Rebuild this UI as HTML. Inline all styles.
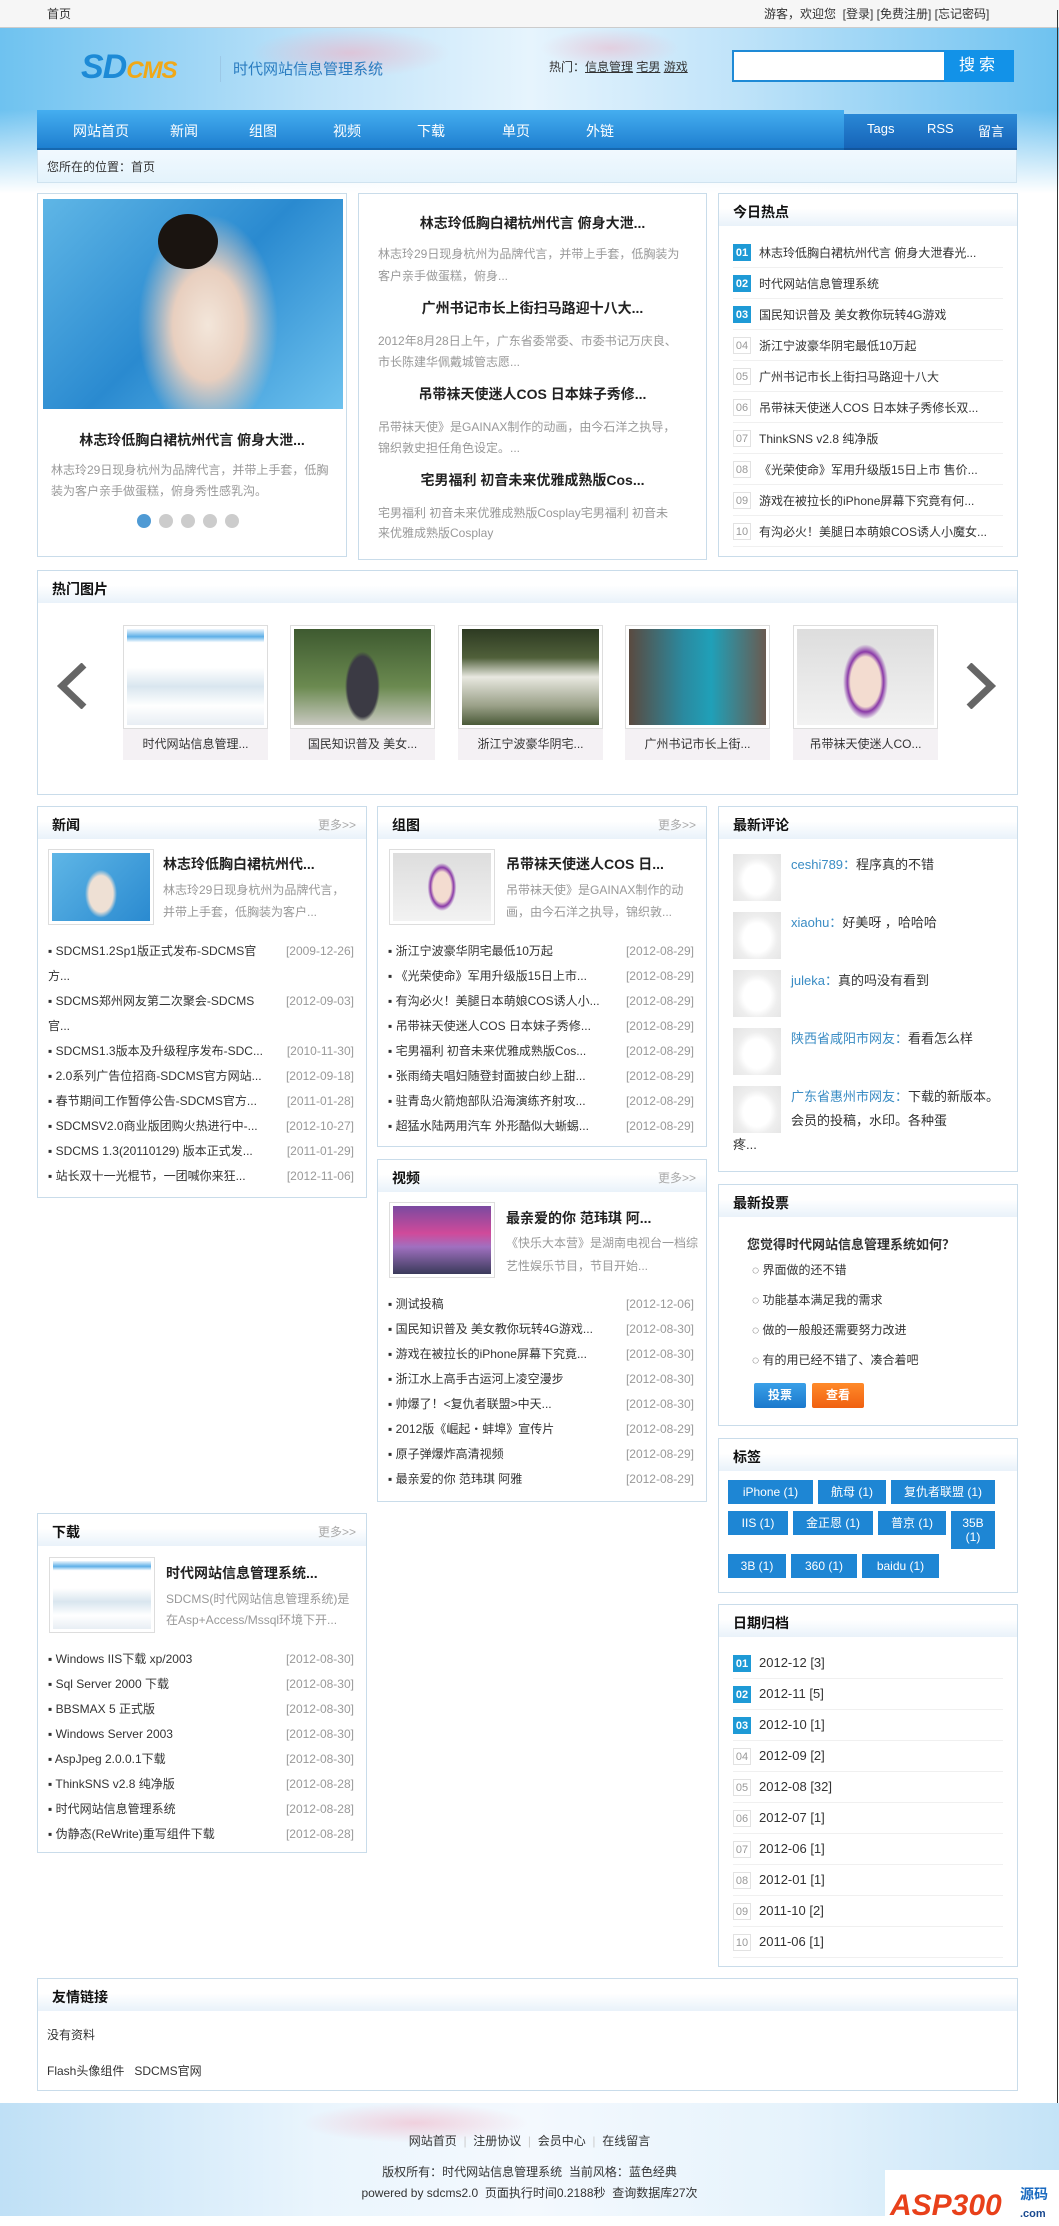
<!DOCTYPE html>
<html><head><meta charset="utf-8">
<style>
*{margin:0;padding:0;box-sizing:border-box}
body{width:1059px;height:2226px;position:relative;background:#fff;font-family:"Liberation Sans","Noto Sans CJK SC",sans-serif;font-size:12px;color:#333;overflow:hidden}
.a{position:absolute}
.box{position:absolute;border:1px solid #c9dcea;background:#fff}
.hd{position:absolute;left:0;right:0;top:0;height:32px;background:linear-gradient(#fff 0%,#fff 45%,#e9f2fa 100%)}
.hd b{position:absolute;left:14px;top:8px;font-size:14px;color:#111}
.hd i{position:absolute;right:10px;top:9px;font-style:normal;color:#aaa;font-size:12px}
.t{white-space:nowrap;position:absolute;line-height:16px}
.g{color:#999}
.bt{font-weight:bold;font-size:14px;color:#222}
.li{position:absolute;left:14px;right:12px;height:25px;line-height:25px;white-space:nowrap}
.li span{position:absolute;right:0;top:0;color:#999}
.num{position:absolute;left:14px;width:18px;height:17px;line-height:17px;text-align:center;font-size:11px;border:1px solid #e2e2e2;color:#999;background:#fff}
.num.on{background:#1e9ad6;color:#fff;border-color:#1e9ad6;font-weight:bold}
.hot{position:absolute;left:14px;right:14px;height:31px;border-bottom:1px solid #f0f0f0}
.hot .tx{position:absolute;left:26px;top:7px;white-space:nowrap}
.tag{position:absolute;background:#1e86d4;color:#fff;font-size:12px;text-align:center;line-height:24px}
.av{position:absolute;left:14px;width:48px;height:47px;background:radial-gradient(ellipse at 50% 55%,#fff 0 40%,#eee 60%,#e3e3e3 100%)}
.cm{position:absolute;left:72px;font-size:13px;line-height:24px}
.cm em{font-style:normal;color:#3a8cc4}
.th{position:absolute;border:1px solid #ddd;padding:3px;background:#fff}
.th div{width:100%;height:100%}
</style></head><body>
<!-- header bg -->
<div class="a" style="left:0;top:28px;width:1059px;height:165px;background:linear-gradient(90deg,#6ec2f0 0%,#bfe3f9 30%,#e6f4fd 50%,#bfe3f9 70%,#6ec2f0 100%)"></div>
<div class="a" style="left:0;top:110px;width:1059px;height:83px;background:linear-gradient(rgba(255,255,255,0),#fff)"></div>
<div class="a" style="left:0;top:0;width:1059px;height:28px;background:#f6f6f6;border-bottom:1px solid #ccc"></div>
<div class="t" style="left:47px;top:6px">首页</div>
<div class="t" style="left:764px;top:6px">游客，欢迎您 &nbsp;[登录] [免费注册] [忘记密码]</div>
<div class="a" style="left:1057px;top:10px;width:1px;height:2165px;background:#333"></div>
<!-- flowers hint -->
<div class="a" style="left:250px;top:28px;width:200px;height:50px;background:radial-gradient(ellipse,rgba(240,170,190,.55),rgba(240,170,190,0) 70%)"></div>
<div class="a" style="left:540px;top:28px;width:140px;height:40px;background:radial-gradient(ellipse,rgba(240,170,190,.45),rgba(240,170,190,0) 70%)"></div>
<!-- logo -->
<div class="t" style="left:81px;top:50px;font-size:34px;line-height:34px;font-weight:bold;font-style:italic;color:#1d8ad6;letter-spacing:-1px">SD<span style="color:#f0a818;font-size:24px">CMS</span></div>
<div class="a" style="left:220px;top:56px;width:1px;height:26px;background:#9cc8e6"></div>
<div class="t" style="left:233px;top:62px;font-size:15px;color:#2a7cc0">时代网站信息管理系统</div>
<div class="t" style="left:549px;top:59px">热门：<u>信息管理</u> <u>宅男</u> <u>游戏</u></div>
<div class="a" style="left:732px;top:50px;width:212px;height:32px;background:#fff;border:2px solid #1e8ad6;border-right:0"></div>
<div class="a" style="left:944px;top:50px;width:70px;height:32px;background:#1292e8;color:#fff;font-size:16px;text-align:center;line-height:32px;letter-spacing:4px">搜索</div>
<!-- nav -->
<div class="a" style="left:37px;top:110px;width:807px;height:40px;background:linear-gradient(#45aef0,#1e7fd0);border-bottom:2px solid #1668b0"></div>
<div class="a" style="left:844px;top:114px;width:173px;height:36px;background:linear-gradient(#2a88d6,#1664b8);border-bottom:2px solid #12559c"></div>
<div class="a" style="left:37px;top:121px;width:980px;color:#fff;font-size:14px">
<span class="a" style="left:36px">网站首页</span><span class="a" style="left:133px">新闻</span><span class="a" style="left:212px">组图</span><span class="a" style="left:296px">视频</span><span class="a" style="left:380px">下载</span><span class="a" style="left:465px">单页</span><span class="a" style="left:549px">外链</span>
<span class="a" style="left:830px;font-size:13px">Tags</span><span class="a" style="left:890px;font-size:13px">RSS</span><span class="a" style="left:941px;font-size:13px">留言</span></div>
<div class="a" style="left:37px;top:150px;width:980px;height:33px;background:linear-gradient(#f1f9fe,#e4f3fc);border:1px solid #cfe3f0;border-top:0"></div>
<div class="t" style="left:47px;top:159px">您所在的位置：首页</div>

<!-- row1 col1 -->
<div class="box" style="left:37px;top:193px;width:310px;height:364px">
<div class="a" style="left:5px;top:5px;width:300px;height:210px;background:radial-gradient(ellipse 70px 110px at 55% 60%,#f3e6da 0,#e8cfbf 50%,rgba(90,170,220,0) 100%),linear-gradient(135deg,#5fb6e6,#2a8ad0 50%,#6ec2ee)"></div>
<div class="a" style="left:120px;top:20px;width:60px;height:55px;border-radius:50%;background:#1a1410"></div>
<div class="t bt" style="left:0;width:308px;text-align:center;top:238px">林志玲低胸白裙杭州代言 俯身大泄...</div>
<div class="t g" style="left:13px;top:268px">林志玲29日现身杭州为品牌代言，并带上手套，低胸</div>
<div class="t g" style="left:13px;top:289px">装为客户亲手做蛋糕，俯身秀性感乳沟。</div>
<div class="a" style="left:99px;top:320px;width:14px;height:14px;border-radius:50%;background:#4f9ad4"></div>
<div class="a" style="left:121px;top:320px;width:14px;height:14px;border-radius:50%;background:#ccc"></div>
<div class="a" style="left:143px;top:320px;width:14px;height:14px;border-radius:50%;background:#ccc"></div>
<div class="a" style="left:165px;top:320px;width:14px;height:14px;border-radius:50%;background:#ccc"></div>
<div class="a" style="left:187px;top:320px;width:14px;height:14px;border-radius:50%;background:#ccc"></div>
</div>
<!-- col2 -->
<div class="box" style="left:358px;top:193px;width:349px;height:367px">
<div class="t bt" style="left:0;width:347px;text-align:center;top:21px">林志玲低胸白裙杭州代言 俯身大泄...</div>
<div class="t g" style="left:19px;top:52px">林志玲29日现身杭州为品牌代言，并带上手套，低胸装为</div>
<div class="t g" style="left:19px;top:74px">客户亲手做蛋糕，俯身...</div>
<div class="t bt" style="left:0;width:347px;text-align:center;top:106px">广州书记市长上街扫马路迎十八大...</div>
<div class="t g" style="left:19px;top:139px">2012年8月28日上午，广东省委常委、市委书记万庆良、</div>
<div class="t g" style="left:19px;top:160px">市长陈建华佩戴城管志愿...</div>
<div class="t bt" style="left:0;width:347px;text-align:center;top:192px">吊带袜天使迷人COS 日本妹子秀修...</div>
<div class="t g" style="left:19px;top:225px">吊带袜天使》是GAINAX制作的动画，由今石洋之执导，</div>
<div class="t g" style="left:19px;top:246px">锦织敦史担任角色设定。...</div>
<div class="t bt" style="left:0;width:347px;text-align:center;top:278px">宅男福利 初音未来优雅成熟版Cos...</div>
<div class="t g" style="left:19px;top:311px">宅男福利 初音未来优雅成熟版Cosplay宅男福利 初音未</div>
<div class="t g" style="left:19px;top:331px">来优雅成熟版Cosplay</div>
</div>
<!-- col3 -->
<div class="box" style="left:718px;top:193px;width:300px;height:364px">
<div class="hd"><b>今日热点</b></div>
<div class="hot" style="top:43px"><div class="num on" style="left:0;top:7px">01</div><div class="tx">林志玲低胸白裙杭州代言 俯身大泄春光...</div></div>
<div class="hot" style="top:74px"><div class="num on" style="left:0;top:7px">02</div><div class="tx">时代网站信息管理系统</div></div>
<div class="hot" style="top:105px"><div class="num on" style="left:0;top:7px">03</div><div class="tx">国民知识普及 美女教你玩转4G游戏</div></div>
<div class="hot" style="top:136px"><div class="num" style="left:0;top:7px">04</div><div class="tx">浙江宁波豪华阴宅最低10万起</div></div>
<div class="hot" style="top:167px"><div class="num" style="left:0;top:7px">05</div><div class="tx">广州书记市长上街扫马路迎十八大</div></div>
<div class="hot" style="top:198px"><div class="num" style="left:0;top:7px">06</div><div class="tx">吊带袜天使迷人COS 日本妹子秀修长双...</div></div>
<div class="hot" style="top:229px"><div class="num" style="left:0;top:7px">07</div><div class="tx">ThinkSNS v2.8 纯净版</div></div>
<div class="hot" style="top:260px"><div class="num" style="left:0;top:7px">08</div><div class="tx">《光荣使命》军用升级版15日上市 售价...</div></div>
<div class="hot" style="top:291px"><div class="num" style="left:0;top:7px">09</div><div class="tx">游戏在被拉长的iPhone屏幕下究竟有何...</div></div>
<div class="hot" style="top:322px"><div class="num" style="left:0;top:7px">10</div><div class="tx">有沟必火！美腿日本萌娘COS诱人小魔女...</div></div>
</div>

<!-- hot images -->
<div class="box" style="left:37px;top:570px;width:981px;height:225px">
<div class="hd"><b>热门图片</b></div>
<svg class="a" style="left:18px;top:92px" width="34" height="46"><polyline points="28,2 6,23 28,44" fill="none" stroke="#666" stroke-width="7"/></svg>
<svg class="a" style="left:925px;top:92px" width="34" height="46"><polyline points="6,2 28,23 6,44" fill="none" stroke="#666" stroke-width="7"/></svg>
</div>
<div class="th" style="left:123px;top:625px;width:145px;height:104px"><div style="background:linear-gradient(#eef6fc 0,#5eb0e8 8%,#fff 14%,#fff 40%,#d9e6ef 60%,#fff 80%,#e8eef4)"></div></div>
<div class="th" style="left:290px;top:625px;width:145px;height:104px"><div style="background:radial-gradient(ellipse 25px 50px at 50% 60%,#3b3a44 0 60%,rgba(0,0,0,0) 70%),linear-gradient(#3e5a30,#6b8a50 60%,#c8c8c0)"></div></div>
<div class="th" style="left:458px;top:625px;width:145px;height:104px"><div style="background:linear-gradient(#2d3a22,#50603a 30%,#e8e8e0 50%,#9aa088 80%,#4a5a38)"></div></div>
<div class="th" style="left:625px;top:625px;width:145px;height:104px"><div style="background:linear-gradient(90deg,#5a4a40,#2a8aa0 40%,#20a0b8 60%,#6a5a50)"></div></div>
<div class="th" style="left:793px;top:625px;width:145px;height:104px"><div style="background:radial-gradient(ellipse 30px 50px at 50% 55%,#f3dcd0 0 50%,#8a3aa8 60%,rgba(0,0,0,0) 75%),linear-gradient(#ddd,#f2f2f2)"></div></div>
<div class="a" style="left:123px;top:729px;width:145px;height:31px;background:#f4f1f4;text-align:center;line-height:31px">时代网站信息管理...</div>
<div class="a" style="left:290px;top:729px;width:145px;height:31px;background:#f4f1f4;text-align:center;line-height:31px">国民知识普及 美女...</div>
<div class="a" style="left:458px;top:729px;width:145px;height:31px;background:#f4f1f4;text-align:center;line-height:31px">浙江宁波豪华阴宅...</div>
<div class="a" style="left:625px;top:729px;width:145px;height:31px;background:#f4f1f4;text-align:center;line-height:31px">广州书记市长上街...</div>
<div class="a" style="left:793px;top:729px;width:145px;height:31px;background:#f4f1f4;text-align:center;line-height:31px">吊带袜天使迷人CO...</div>

<!-- news -->
<div class="box" style="left:37px;top:806px;width:330px;height:392px">
<div class="hd"><b>新闻</b><i>更多&gt;&gt;</i></div>
<div class="th" style="left:10px;top:42px;width:106px;height:76px"><div style="background:radial-gradient(ellipse 20px 30px at 50% 60%,#eee0d4 0 60%,rgba(0,0,0,0) 80%),linear-gradient(135deg,#5fb6e6,#2a8ad0)"></div></div>
<div class="t bt" style="left:125px;top:49px">林志玲低胸白裙杭州代...</div>
<div class="t g" style="left:125px;top:75px">林志玲29日现身杭州为品牌代言，</div>
<div class="t g" style="left:125px;top:97px">并带上手套，低胸装为客户...</div>
<div class="li" style="top:132px;left:10px">▪ SDCMS1.2Sp1版正式发布-SDCMS官<span>[2009-12-26]</span></div>
<div class="li" style="top:157px;left:10px">方...</div>
<div class="li" style="top:182px;left:10px">▪ SDCMS郑州网友第二次聚会-SDCMS<span>[2012-09-03]</span></div>
<div class="li" style="top:207px;left:10px">官...</div>
<div class="li" style="top:232px;left:10px">▪ SDCMS1.3版本及升级程序发布-SDC...<span>[2010-11-30]</span></div>
<div class="li" style="top:257px;left:10px">▪ 2.0系列广告位招商-SDCMS官方网站...<span>[2012-09-18]</span></div>
<div class="li" style="top:282px;left:10px">▪ 春节期间工作暂停公告-SDCMS官方...<span>[2011-01-28]</span></div>
<div class="li" style="top:307px;left:10px">▪ SDCMSV2.0商业版团购火热进行中-...<span>[2012-10-27]</span></div>
<div class="li" style="top:332px;left:10px">▪ SDCMS 1.3(20110129) 版本正式发...<span>[2011-01-29]</span></div>
<div class="li" style="top:357px;left:10px">▪ 站长双十一光棍节，一团喊你来狂...<span>[2012-11-06]</span></div>
</div>

<!-- photos -->
<div class="box" style="left:377px;top:806px;width:330px;height:341px">
<div class="hd"><b>组图</b><i>更多&gt;&gt;</i></div>
<div class="th" style="left:11px;top:42px;width:106px;height:76px"><div style="background:radial-gradient(ellipse 18px 30px at 50% 50%,#f3dcd0 0 50%,#8a3aa8 65%,rgba(0,0,0,0) 80%),linear-gradient(#ddd,#f2f2f2)"></div></div>
<div class="t bt" style="left:128px;top:49px">吊带袜天使迷人COS 日...</div>
<div class="t g" style="left:128px;top:75px">吊带袜天使》是GAINAX制作的动</div>
<div class="t g" style="left:128px;top:97px">画，由今石洋之执导，锦织敦...</div>
<div class="li" style="top:132px;left:10px">▪ 浙江宁波豪华阴宅最低10万起<span>[2012-08-29]</span></div>
<div class="li" style="top:157px;left:10px">▪ 《光荣使命》军用升级版15日上市...<span>[2012-08-29]</span></div>
<div class="li" style="top:182px;left:10px">▪ 有沟必火！美腿日本萌娘COS诱人小...<span>[2012-08-29]</span></div>
<div class="li" style="top:207px;left:10px">▪ 吊带袜天使迷人COS 日本妹子秀修...<span>[2012-08-29]</span></div>
<div class="li" style="top:232px;left:10px">▪ 宅男福利 初音未来优雅成熟版Cos...<span>[2012-08-29]</span></div>
<div class="li" style="top:257px;left:10px">▪ 张雨绮夫唱妇随登封面披白纱上甜...<span>[2012-08-29]</span></div>
<div class="li" style="top:282px;left:10px">▪ 驻青岛火箭炮部队沿海演练齐射攻...<span>[2012-08-29]</span></div>
<div class="li" style="top:307px;left:10px">▪ 超猛水陆两用汽车 外形酷似大蜥蜴...<span>[2012-08-29]</span></div>
</div>

<!-- video -->
<div class="box" style="left:377px;top:1159px;width:330px;height:343px">
<div class="hd"><b>视频</b><i>更多&gt;&gt;</i></div>
<div class="th" style="left:11px;top:42px;width:106px;height:76px"><div style="background:linear-gradient(#7a4aa0,#d04a9a 40%,#a070c0 60%,#3a3a5a)"></div></div>
<div class="t bt" style="left:128px;top:50px">最亲爱的你 范玮琪 阿...</div>
<div class="t g" style="left:128px;top:75px">《快乐大本营》是湖南电视台一档综</div>
<div class="t g" style="left:128px;top:98px">艺性娱乐节目，节目开始...</div>
<div class="li" style="top:132px;left:10px">▪ 测试投稿<span>[2012-12-06]</span></div>
<div class="li" style="top:157px;left:10px">▪ 国民知识普及 美女教你玩转4G游戏...<span>[2012-08-30]</span></div>
<div class="li" style="top:182px;left:10px">▪ 游戏在被拉长的iPhone屏幕下究竟...<span>[2012-08-30]</span></div>
<div class="li" style="top:207px;left:10px">▪ 浙江水上高手古运河上凌空漫步<span>[2012-08-30]</span></div>
<div class="li" style="top:232px;left:10px">▪ 帅爆了！&lt;复仇者联盟&gt;中天...<span>[2012-08-30]</span></div>
<div class="li" style="top:257px;left:10px">▪ 2012版《崛起・蚌埠》宣传片<span>[2012-08-29]</span></div>
<div class="li" style="top:282px;left:10px">▪ 原子弹爆炸高清视频<span>[2012-08-29]</span></div>
<div class="li" style="top:307px;left:10px">▪ 最亲爱的你 范玮琪 阿雅<span>[2012-08-29]</span></div>
</div>

<!-- download -->
<div class="box" style="left:37px;top:1513px;width:330px;height:340px">
<div class="hd"><b>下载</b><i>更多&gt;&gt;</i></div>
<div class="th" style="left:11px;top:43px;width:106px;height:76px"><div style="background:linear-gradient(#eef6fc 0,#5eb0e8 8%,#fff 14%,#fff 40%,#d9e6ef 60%,#fff 80%,#e8eef4)"></div></div>
<div class="t bt" style="left:128px;top:51px">时代网站信息管理系统...</div>
<div class="t g" style="left:128px;top:77px">SDCMS(时代网站信息管理系统)是</div>
<div class="t g" style="left:128px;top:98px">在Asp+Access/Mssql环境下开...</div>
<div class="li" style="top:133px;left:10px">▪ Windows IIS下载 xp/2003<span>[2012-08-30]</span></div>
<div class="li" style="top:158px;left:10px">▪ Sql Server 2000 下载<span>[2012-08-30]</span></div>
<div class="li" style="top:183px;left:10px">▪ BBSMAX 5 正式版<span>[2012-08-30]</span></div>
<div class="li" style="top:208px;left:10px">▪ Windows Server 2003<span>[2012-08-30]</span></div>
<div class="li" style="top:233px;left:10px">▪ AspJpeg 2.0.0.1下载<span>[2012-08-30]</span></div>
<div class="li" style="top:258px;left:10px">▪ ThinkSNS v2.8 纯净版<span>[2012-08-28]</span></div>
<div class="li" style="top:283px;left:10px">▪ 时代网站信息管理系统<span>[2012-08-28]</span></div>
<div class="li" style="top:308px;left:10px">▪ 伪静态(ReWrite)重写组件下载<span>[2012-08-28]</span></div>
</div>

<!-- comments -->
<div class="box" style="left:718px;top:806px;width:300px;height:366px">
<div class="hd"><b>最新评论</b></div>
<div class="av" style="top:47px"></div><div class="cm" style="top:46px"><em>ceshi789：</em>程序真的不错</div>
<div class="av" style="top:105px"></div><div class="cm" style="top:104px"><em>xiaohu：</em>好美呀 ，哈哈哈</div>
<div class="av" style="top:163px"></div><div class="cm" style="top:162px"><em>juleka：</em>真的吗没有看到</div>
<div class="av" style="top:221px"></div><div class="cm" style="top:220px"><em>陕西省咸阳市网友：</em>看看怎么样</div>
<div class="av" style="top:279px"></div><div class="cm" style="top:278px;width:215px;white-space:normal"><em>广东省惠州市网友：</em>下载的新版本。会员的投稿，水印。各种蛋</div>
<div class="t" style="left:14px;top:330px;font-size:13px">疼...</div>
</div>

<!-- vote -->
<div class="box" style="left:718px;top:1184px;width:300px;height:242px">
<div class="hd"><b>最新投票</b></div>
<div class="t" style="left:28px;top:52px;font-weight:bold;font-size:13px">您觉得时代网站信息管理系统如何？</div>
<div class="t" style="left:33px;top:77px">◌ 界面做的还不错</div>
<div class="t" style="left:33px;top:107px">◌ 功能基本满足我的需求</div>
<div class="t" style="left:33px;top:137px">◌ 做的一般般还需要努力改进</div>
<div class="t" style="left:33px;top:167px">◌ 有的用已经不错了、凑合着吧</div>
<div class="a" style="left:35px;top:198px;width:52px;height:25px;background:linear-gradient(#3aa0e8,#1a78cc);color:#fff;font-weight:bold;text-align:center;line-height:25px;border-radius:2px">投票</div>
<div class="a" style="left:93px;top:198px;width:52px;height:25px;background:linear-gradient(#ff8a2a,#f06010);color:#fff;font-weight:bold;text-align:center;line-height:25px;border-radius:2px">查看</div>
</div>

<!-- tags -->
<div class="box" style="left:718px;top:1438px;width:300px;height:155px">
<div class="hd"><b>标签</b></div>
</div>
<div class="tag" style="left:728px;top:1480px;width:85px">iPhone (1)</div>
<div class="tag" style="left:818px;top:1480px;width:68px">航母 (1)</div>
<div class="tag" style="left:891px;top:1480px;width:104px">复仇者联盟 (1)</div>
<div class="tag" style="left:728px;top:1511px;width:60px">IIS (1)</div>
<div class="tag" style="left:793px;top:1511px;width:80px">金正恩 (1)</div>
<div class="tag" style="left:878px;top:1511px;width:68px">普京 (1)</div>
<div class="tag" style="left:951px;top:1511px;width:44px;height:38px;line-height:14px;padding-top:5px">35B<br>(1)</div>
<div class="tag" style="left:728px;top:1554px;width:58px">3B (1)</div>
<div class="tag" style="left:791px;top:1554px;width:66px">360 (1)</div>
<div class="tag" style="left:862px;top:1554px;width:77px">baidu (1)</div>

<!-- date archive -->
<div class="box" style="left:718px;top:1604px;width:300px;height:363px">
<div class="hd"><b>日期归档</b></div>
<div class="hot" style="top:43px"><div class="num on" style="left:0;top:7px">01</div><div class="tx" style="font-size:13px">2012-12 [3]</div></div>
<div class="hot" style="top:74px"><div class="num on" style="left:0;top:7px">02</div><div class="tx" style="font-size:13px">2012-11 [5]</div></div>
<div class="hot" style="top:105px"><div class="num on" style="left:0;top:7px">03</div><div class="tx" style="font-size:13px">2012-10 [1]</div></div>
<div class="hot" style="top:136px"><div class="num" style="left:0;top:7px">04</div><div class="tx" style="font-size:13px">2012-09 [2]</div></div>
<div class="hot" style="top:167px"><div class="num" style="left:0;top:7px">05</div><div class="tx" style="font-size:13px">2012-08 [32]</div></div>
<div class="hot" style="top:198px"><div class="num" style="left:0;top:7px">06</div><div class="tx" style="font-size:13px">2012-07 [1]</div></div>
<div class="hot" style="top:229px"><div class="num" style="left:0;top:7px">07</div><div class="tx" style="font-size:13px">2012-06 [1]</div></div>
<div class="hot" style="top:260px"><div class="num" style="left:0;top:7px">08</div><div class="tx" style="font-size:13px">2012-01 [1]</div></div>
<div class="hot" style="top:291px"><div class="num" style="left:0;top:7px">09</div><div class="tx" style="font-size:13px">2011-10 [2]</div></div>
<div class="hot" style="top:322px"><div class="num" style="left:0;top:7px">10</div><div class="tx" style="font-size:13px">2011-06 [1]</div></div>
</div>

<!-- links -->
<div class="box" style="left:37px;top:1978px;width:981px;height:113px">
<div class="hd"><b>友情链接</b></div>
<div class="t" style="left:9px;top:48px">没有资料</div>
<div class="t" style="left:9px;top:84px">Flash头像组件 &nbsp; SDCMS官网</div>
</div>

<!-- footer -->
<div class="a" style="left:0;top:2103px;width:1059px;height:113px;background:linear-gradient(90deg,#bfe0f6 0%,#eaf5fd 30%,#f4f9fe 50%,#e6f3fc 75%,#c4e3f7 100%)"></div>
<div class="a" style="left:300px;top:2103px;width:230px;height:40px;background:radial-gradient(ellipse,rgba(240,170,190,.5),rgba(240,170,190,0) 70%)"></div>
<div class="t" style="left:0;width:1059px;text-align:center;top:2133px">网站首页 <span style="color:#ccc">&nbsp;|&nbsp;</span> 注册协议 <span style="color:#ccc">&nbsp;|&nbsp;</span> 会员中心 <span style="color:#ccc">&nbsp;|&nbsp;</span> 在线留言</div>
<div class="t" style="left:0;width:1059px;text-align:center;top:2164px">版权所有：时代网站信息管理系统 &nbsp;当前风格：蓝色经典</div>
<div class="t" style="left:0;width:1059px;text-align:center;top:2185px">powered by sdcms2.0 &nbsp;页面执行时间0.2188秒 &nbsp;查询数据库27次</div>
<div class="a" style="left:885px;top:2170px;width:174px;height:56px;background:#fff"></div>
<div class="t" style="left:890px;top:2190px;font-size:30px;line-height:32px;font-weight:bold;font-style:italic;color:#e8401a">ASP300</div>
<div class="t" style="left:1020px;top:2186px;font-size:14px;font-weight:bold;color:#1a6ac0">源码</div>
<div class="t" style="left:1020px;top:2206px;font-size:11px;font-weight:bold;color:#1a4a90">.com</div>
</body></html>
